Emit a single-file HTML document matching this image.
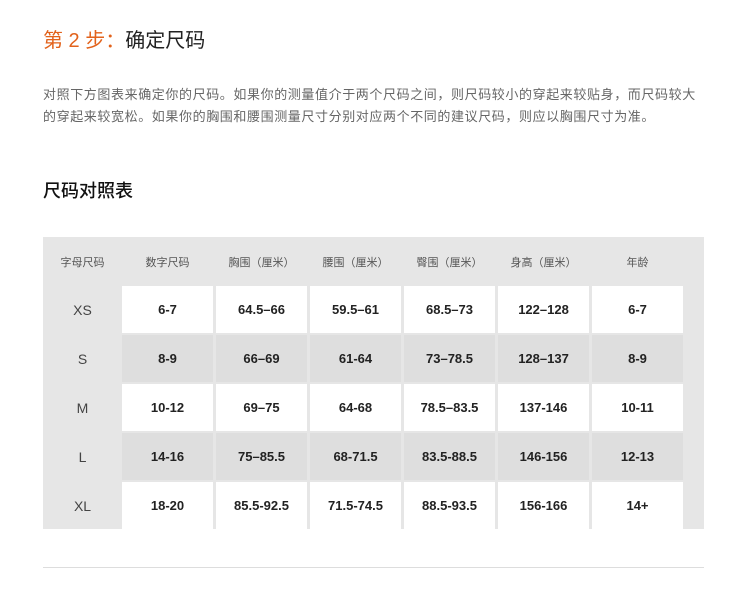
<!DOCTYPE html><html><head><meta charset="utf-8"><style>
body{margin:0;background:#fff;width:750px;height:590px;font-family:"Liberation Sans","Noto Sans CJK SC",sans-serif;position:relative;overflow:hidden}
.t{position:absolute;left:43px;top:24px;font-size:20px;color:#222}
.t span{color:#e2621b}
.p{position:absolute;left:43px;top:84px;width:664px;font-size:13px;letter-spacing:0.6px;line-height:22px;color:#666}
.h{position:absolute;left:43px;top:177px;font-size:18px;color:#111;font-weight:500}
.tb{position:absolute;left:43px;top:237px;width:661px;height:292px;background:#e6e6e6}
.c{position:absolute;display:flex;align-items:center;justify-content:center;font-size:13px;font-weight:bold;color:#222}
.hd{font-size:11px;font-weight:normal;color:#555}
.lf{font-weight:normal;color:#444;font-size:14px}
.line{position:absolute;left:43px;top:567px;width:661px;height:1px;background:#ddd}
</style></head><body>
<div class="t"><span>第 2 步：</span>确定尺码</div>
<div class="p">对照下方图表来确定你的尺码。如果你的测量值介于两个尺码之间，则尺码较小的穿起来较贴身，而尺码较大的穿起来较宽松。如果你的胸围和腰围测量尺寸分别对应两个不同的建议尺码，则应以胸围尺寸为准。</div>
<div class="h">尺码对照表</div>
<div class="tb"></div>
<div id="g"></div>
<div class="line"></div>
<script>
var xs=[122,216,310,404,498,592],ys=[286,335,384,433,482];
var hd=["字母尺码","数字尺码","胸围（厘米）","腰围（厘米）","臀围（厘米）","身高（厘米）","年龄"];
var L=["XS","S","M","L","XL"];
var d=[["6-7","64.5–66","59.5–61","68.5–73","122–128","6-7"],["8-9","66–69","61-64","73–78.5","128–137","8-9"],["10-12","69–75","64-68","78.5–83.5","137-146","10-11"],["14-16","75–85.5","68-71.5","83.5-88.5","146-156","12-13"],["18-20","85.5-92.5","71.5-74.5","88.5-93.5","156-166","14+"]];
var h="";
var hx=[43].concat(xs),hw=[79,91,91,91,91,91,91];
for(var i=0;i<7;i++)h+='<div class="c hd" style="left:'+hx[i]+'px;top:237px;width:'+hw[i]+'px;height:49px">'+hd[i]+'</div>';
for(var r=0;r<5;r++){h+='<div class="c lf" style="left:43px;top:'+ys[r]+'px;width:79px;height:47px">'+L[r]+'</div>';
for(var j=0;j<6;j++)h+='<div class="c" style="left:'+xs[j]+'px;top:'+ys[r]+'px;width:91px;height:47px;background:'+(r%2?'#dedede':'#fff')+'">'+d[r][j]+'</div>';}
document.getElementById('g').innerHTML=h;
</script>
</body></html>
